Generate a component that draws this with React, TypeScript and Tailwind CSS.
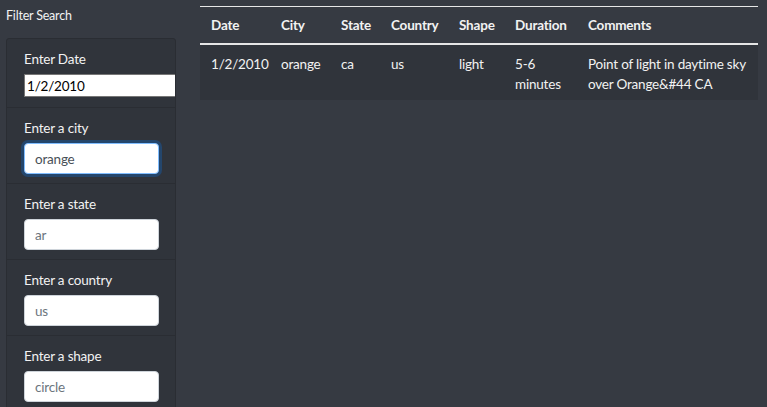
import { useEffect, useRef } from 'react';

const rows = [
  {
    date: '1/2/2010',
    city: 'orange',
    state: 'ca',
    country: 'us',
    shape: 'light',
    duration: '5-6 minutes',
    comments: 'Point of light in daytime sky over Orange&#44 CA',
  },
];

const filters = [
  { label: 'Enter a city', value: 'orange', focus: true },
  { label: 'Enter a state', value: 'ar' },
  { label: 'Enter a country', value: 'us' },
  { label: 'Enter a shape', value: 'circle' },
];

function FilterItem({ label, value, focus }: { label: string; value: string; focus?: boolean }) {
  const ref = useRef<HTMLInputElement>(null);
  useEffect(() => {
    if (focus && ref.current) {
      ref.current.focus();
      ref.current.setSelectionRange(value.length, value.length);
    }
  }, [focus, value]);
  return (
    <li className="border-t border-[#2a2d33] pt-[10px] pb-[9px] pl-[17px]">
      <label className="block text-[13.5px] leading-[21px] text-[#f2f2f2] mb-[4px]">{label}</label>
      {focus ? (
        <input
          ref={ref}
          defaultValue={value}
          className="block w-[135px] h-[31px] px-[10px] text-[13.5px] tracking-[-0.2px] rounded-[4px] bg-white text-[#495057] border border-[#80bdff] outline-none shadow-[0_0_0_3px_rgba(0,123,255,0.25)]"
        />
      ) : (
        <input
          placeholder={value}
          className="block w-[135px] h-[31px] px-[10px] text-[13.5px] tracking-[-0.2px] rounded-[4px] bg-white text-[#495057] placeholder:text-[#6c757d] border border-[#ced4da] outline-none"
        />
      )}
    </li>
  );
}

export default function App() {
  return (
    <div className="min-h-[407px] bg-[#363a42] text-[#f2f2f2] flex tracking-[-0.2px] font-['Lato','Open_Sans',sans-serif]">
      <aside className="w-[176px] shrink-0 pl-[6px]">
        <h1 className="text-[12.5px] leading-[20px] pt-[6px] pb-[12px]">Filter Search</h1>
        <ul className="bg-[#30343b] border border-[#2a2d33] rounded-[3px] overflow-hidden">
          <li className="pt-[10px] pb-[10px] pl-[17px]">
            <label className="block text-[13.5px] leading-[21px] mb-[4px]">Enter Date</label>
            <input
              defaultValue="1/2/2010"
              className="block w-[170px] h-[23px] px-[2px] text-[13.5px] tracking-[-0.2px] bg-white text-black border border-[#767676] outline-none"
            />
          </li>
          {filters.map((f) => (
            <FilterItem key={f.label} {...f} />
          ))}
        </ul>
      </aside>
      <main className="pl-[24px] pt-[6px]">
        <table className="table-fixed w-[558px] text-[13.5px] leading-[20px] border-t border-[#e6e6e6] border-collapse">
          <thead>
            <tr className="border-b-2 border-[#e6e6e6] text-left">
              <th className="w-[70px] pl-[11px] py-[8px] font-bold">Date</th>
              <th className="w-[60px] pl-[11px] font-bold">City</th>
              <th className="w-[50px] pl-[11px] font-bold">State</th>
              <th className="w-[68px] pl-[11px] font-bold">Country</th>
              <th className="w-[56px] pl-[11px] font-bold">Shape</th>
              <th className="w-[73px] pl-[11px] font-bold">Duration</th>
              <th className="w-[181px] pl-[11px] font-bold">Comments</th>
            </tr>
          </thead>
          <tbody>
            {rows.map((r) => (
              <tr key={r.date} className="bg-[#30343b] align-top">
                <td className="pl-[11px] pt-[9px] pb-[6px] whitespace-nowrap">{r.date}</td>
                <td className="pl-[11px] pt-[9px]">{r.city}</td>
                <td className="pl-[11px] pt-[9px]">{r.state}</td>
                <td className="pl-[11px] pt-[9px]">{r.country}</td>
                <td className="pl-[11px] pt-[9px]">{r.shape}</td>
                <td className="pl-[11px] pt-[9px] pb-[6px] pr-[8px]">{r.duration}</td>
                <td className="pl-[11px] pt-[9px] pb-[6px]">{r.comments}</td>
              </tr>
            ))}
          </tbody>
        </table>
      </main>
    </div>
  );
}
